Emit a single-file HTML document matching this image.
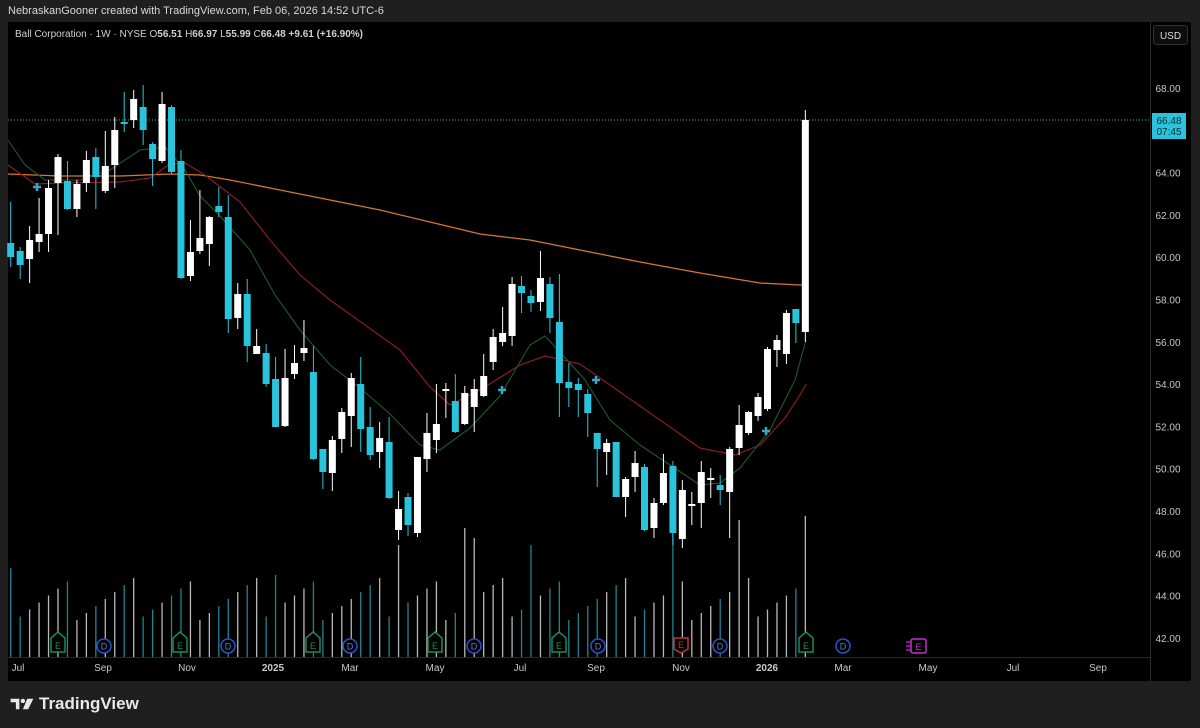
<!DOCTYPE html>
<html><head><meta charset="utf-8"><style>
html,body{margin:0;padding:0;width:1200px;height:728px;background:#1f1f1f;overflow:hidden;font-family:"Liberation Sans",sans-serif}
#hdr{position:absolute;left:8px;top:5px;font-size:11px;color:#d8d8d8}
#chart{position:absolute;left:8px;top:22px;width:1183px;height:659px;background:#000;border-radius:2px}
#logo{position:absolute;left:10px;top:694px;color:#e8e8e8;font-size:17px;font-weight:bold;display:flex;align-items:center;gap:5px}
</style></head><body>
<div id="hdr">NebraskanGooner created with TradingView.com, Feb 06, 2026 14:52 UTC-6</div>
<div id="chart"></div>
<svg id="s" width="1200" height="728" style="position:absolute;left:0;top:0" font-family="Liberation Sans, sans-serif"></svg>
<div id="logo"><svg width="24" height="14" viewBox="0 0 26 16"><path d="M0 2h10v12H6V6H0z" fill="#e8e8e8"/><circle cx="14" cy="4.5" r="2.5" fill="#e8e8e8"/><path d="M19 2h7l-6 12h-6z" fill="#e8e8e8"/></svg><span>TradingView</span></div>
<script>
const C=[[243,257,202,267,1],[251,265,247,279,1],[240,259,226,283,0],[234,242,198,252,0],[188,234,180,252,0],[157,183,154,235,0],[181,209,161,210,1],[184,209,180,217,0],[160,183,151,192,0],[157,177,148,209,1],[166,191,131,193,0],[130,165,117,188,0],[122,124,92,132,1],[99,120,90,128,0],[107,130,85,145,1],[144,159,142,186,1],[104,161,92,163,0],[107,172,105,174,1],[161,278,150,279,1],[252,276,220,281,0],[238,251,190,254,0],[217,244,216,266,0],[206,212,187,217,1],[217,319,195,333,1],[294,318,283,329,0],[294,346,279,362,1],[346,354,329,354,0],[353,384,344,387,1],[379,427,357,427,1],[378,426,349,427,0],[363,374,345,379,0],[348,353,320,361,0],[372,459,346,460,1],[449,472,449,489,1],[440,473,436,491,0],[412,439,408,453,0],[378,416,373,447,0],[384,429,357,452,1],[427,455,407,460,1],[438,452,422,468,0],[442,498,417,499,1],[509,530,491,540,0],[497,525,493,536,1],[457,533,457,537,0],[433,459,413,472,0],[424,440,384,453,0],[389,391,383,418,0],[401,432,374,433,1],[393,424,386,425,0],[389,407,379,432,0],[376,396,354,397,0],[337,362,329,370,0],[333,342,307,346,0],[284,336,277,346,0],[286,293,276,313,1],[296,303,290,312,1],[278,302,251,311,0],[284,318,277,333,1],[322,383,274,417,1],[382,388,363,407,1],[384,390,378,417,1],[394,413,389,437,1],[433,449,433,487,1],[443,452,439,475,0],[442,497,442,497,1],[479,497,477,517,0],[463,477,451,492,0],[467,530,464,531,1],[503,528,498,538,0],[473,503,454,505,0],[466,533,461,545,1],[490,539,480,548,0],[504,506,492,525,0],[472,503,461,528,0],[478,480,468,498,0],[485,490,475,505,1],[449,492,447,538,0],[425,448,405,455,0],[412,433,411,435,0],[397,416,393,421,0],[349,409,347,411,0],[340,350,335,367,0],[313,354,310,364,0],[309,323,309,343,1],[120,332,110,342,0]];
const X=i=>10.7+i*9.46;
let h='';
h+='<line x1="8" y1="120" x2="1150" y2="120" stroke="#3fb8c8" stroke-width="1" stroke-dasharray="1,2"/>';
const tall={0:568,28:575,41:545,48:528,49:538,55:545,70:522,77:520,84:516};
for(let i=0;i<C.length;i++){let t=tall[i]||(578+((i*37)%13)*3.5);let col=C[i][4]?'#1e8594':'#b8b8b8';
h+=`<line x1="${X(i)}" y1="${t}" x2="${X(i)}" y2="657" stroke="${col}" stroke-width="1.3"/>`;}
const pl=(pts,c,w)=>`<polyline fill="none" stroke="${c}" stroke-width="${w}" points="${pts}"/>`;
h+=pl("8,174 60,176 120,176 170,174 200,175 230,180 280,190 330,200 380,210 430,222 480,234 530,240 580,250 640,262 700,273 760,283 800,285 806,285","#d9772e",1.3);
h+=pl("8,165 35,184 60,183 120,182 150,178 170,164 185,163 205,175 240,202 270,240 300,275 330,300 365,325 400,350 430,387 450,405 480,390 520,365 545,356 580,364 620,392 660,420 700,448 735,455 760,445 785,418 800,395 806,384","#8b1c1c",1.2);
h+=pl("8,140 25,165 45,180 80,180 110,170 140,150 165,147 185,170 200,196 220,216 250,250 275,295 300,330 330,365 360,388 390,414 420,445 440,450 470,428 500,396 530,345 545,336 560,352 585,380 610,420 640,445 670,465 700,485 720,483 740,468 770,430 795,380 806,340","#1f5a2c",1.1);
for(let i=0;i<C.length;i++){const[a,b,wt,wb,c]=C[i];const x=X(i);const col=c?'#29c4dc':'#ffffff';
h+=`<line x1="${x}" y1="${wt}" x2="${x}" y2="${wb}" stroke="${col}" stroke-width="1"/>`;
h+=`<rect x="${x-3.5}" y="${a}" width="7" height="${Math.max(1.5,b-a)}" fill="${col}"/>`;}
[[37,187],[502,390],[596,380],[766,431]].forEach(([x,y])=>{h+=`<path d="M${x-4} ${y}h8M${x} ${y-4}v8" stroke="#3aa5c5" stroke-width="2.5"/>`});
const E=(x,c)=>`<path d="M${x-7} ${638}l7-6 7 6v14h-14z" fill="#000" stroke="${c}" stroke-width="1.5"/><text x="${x}" y="${649}" font-size="9" fill="${c}" text-anchor="middle">E</text>`;
const D=(x)=>`<circle cx="${x}" cy="646" r="7" fill="#000" stroke="#2b52c9" stroke-width="1.5"/><text x="${x}" y="649.5" font-size="9" fill="#5a7ce0" text-anchor="middle">D</text>`;
[58,180,313,435,559,806].forEach(x=>h+=E(x,'#1c8a5a'));
h+=`<path d="M674 638h14v11l-7 4-7-4z" fill="#000" stroke="#c9303a" stroke-width="1.5"/><text x="681" y="648" font-size="9" fill="#c9303a" text-anchor="middle">E</text>`;
[104,228,350,474,598,720,843].forEach(x=>h+=D(x));
h+=`<rect x="911" y="639" width="15" height="14" rx="2" fill="#000" stroke="#c82ad6" stroke-width="1.5"/><text x="918.5" y="650" font-size="9" fill="#c82ad6" text-anchor="middle">E</text><path d="M906 642h5M906 646h5M906 650h5" stroke="#c82ad6" stroke-width="1.2"/>`;
h+='<line x1="1150.5" y1="22" x2="1150.5" y2="681" stroke="#2a2a2a"/><line x1="8" y1="657.5" x2="1150" y2="657.5" stroke="#2a2a2a"/>';
[[18,'Jul'],[103,'Sep'],[187,'Nov'],[273,'2025'],[350,'Mar'],[435,'May'],[520,'Jul'],[596,'Sep'],[681,'Nov'],[767,'2026'],[843,'Mar'],[928,'May'],[1013,'Jul'],[1098,'Sep']].forEach(([x,t])=>{h+=`<text x="${x}" y="671" font-size="10" fill="#c8c8c8" text-anchor="middle"${/20/.test(t)?' font-weight="bold"':''}>${t}</text>`});
for(let p=68;p>=42;p-=2){if(p===66)continue;const y=88+(68-p)*21.15;h+=`<text x="1168" y="${y+4}" font-size="10" fill="#c8c8c8" text-anchor="middle">${p.toFixed(2)}</text>`}
h+='<rect x="1152" y="113" width="34" height="26" fill="#29c4dc"/><text x="1169" y="124" font-size="10" fill="#0a2a30" text-anchor="middle">66.48</text><text x="1169" y="135" font-size="10" fill="#0a2a30" text-anchor="middle">07:45</text>';
h+='<rect x="1153.5" y="25.5" width="34" height="19" rx="3" fill="#0c0c0c" stroke="#333"/><text x="1170.5" y="39" font-size="10" fill="#ddd" text-anchor="middle">USD</text>';
h+='<text x="15" y="37" font-size="10" fill="#d0d0d0">Ball Corporation · 1W · NYSE  O<tspan font-weight="bold">56.51</tspan>  H<tspan font-weight="bold">66.97</tspan>  L<tspan font-weight="bold">55.99</tspan>  C<tspan font-weight="bold">66.48</tspan>  <tspan font-weight="bold">+9.61 (+16.90%)</tspan></text>';
document.getElementById('s').innerHTML=h;
</script>
</body></html>
